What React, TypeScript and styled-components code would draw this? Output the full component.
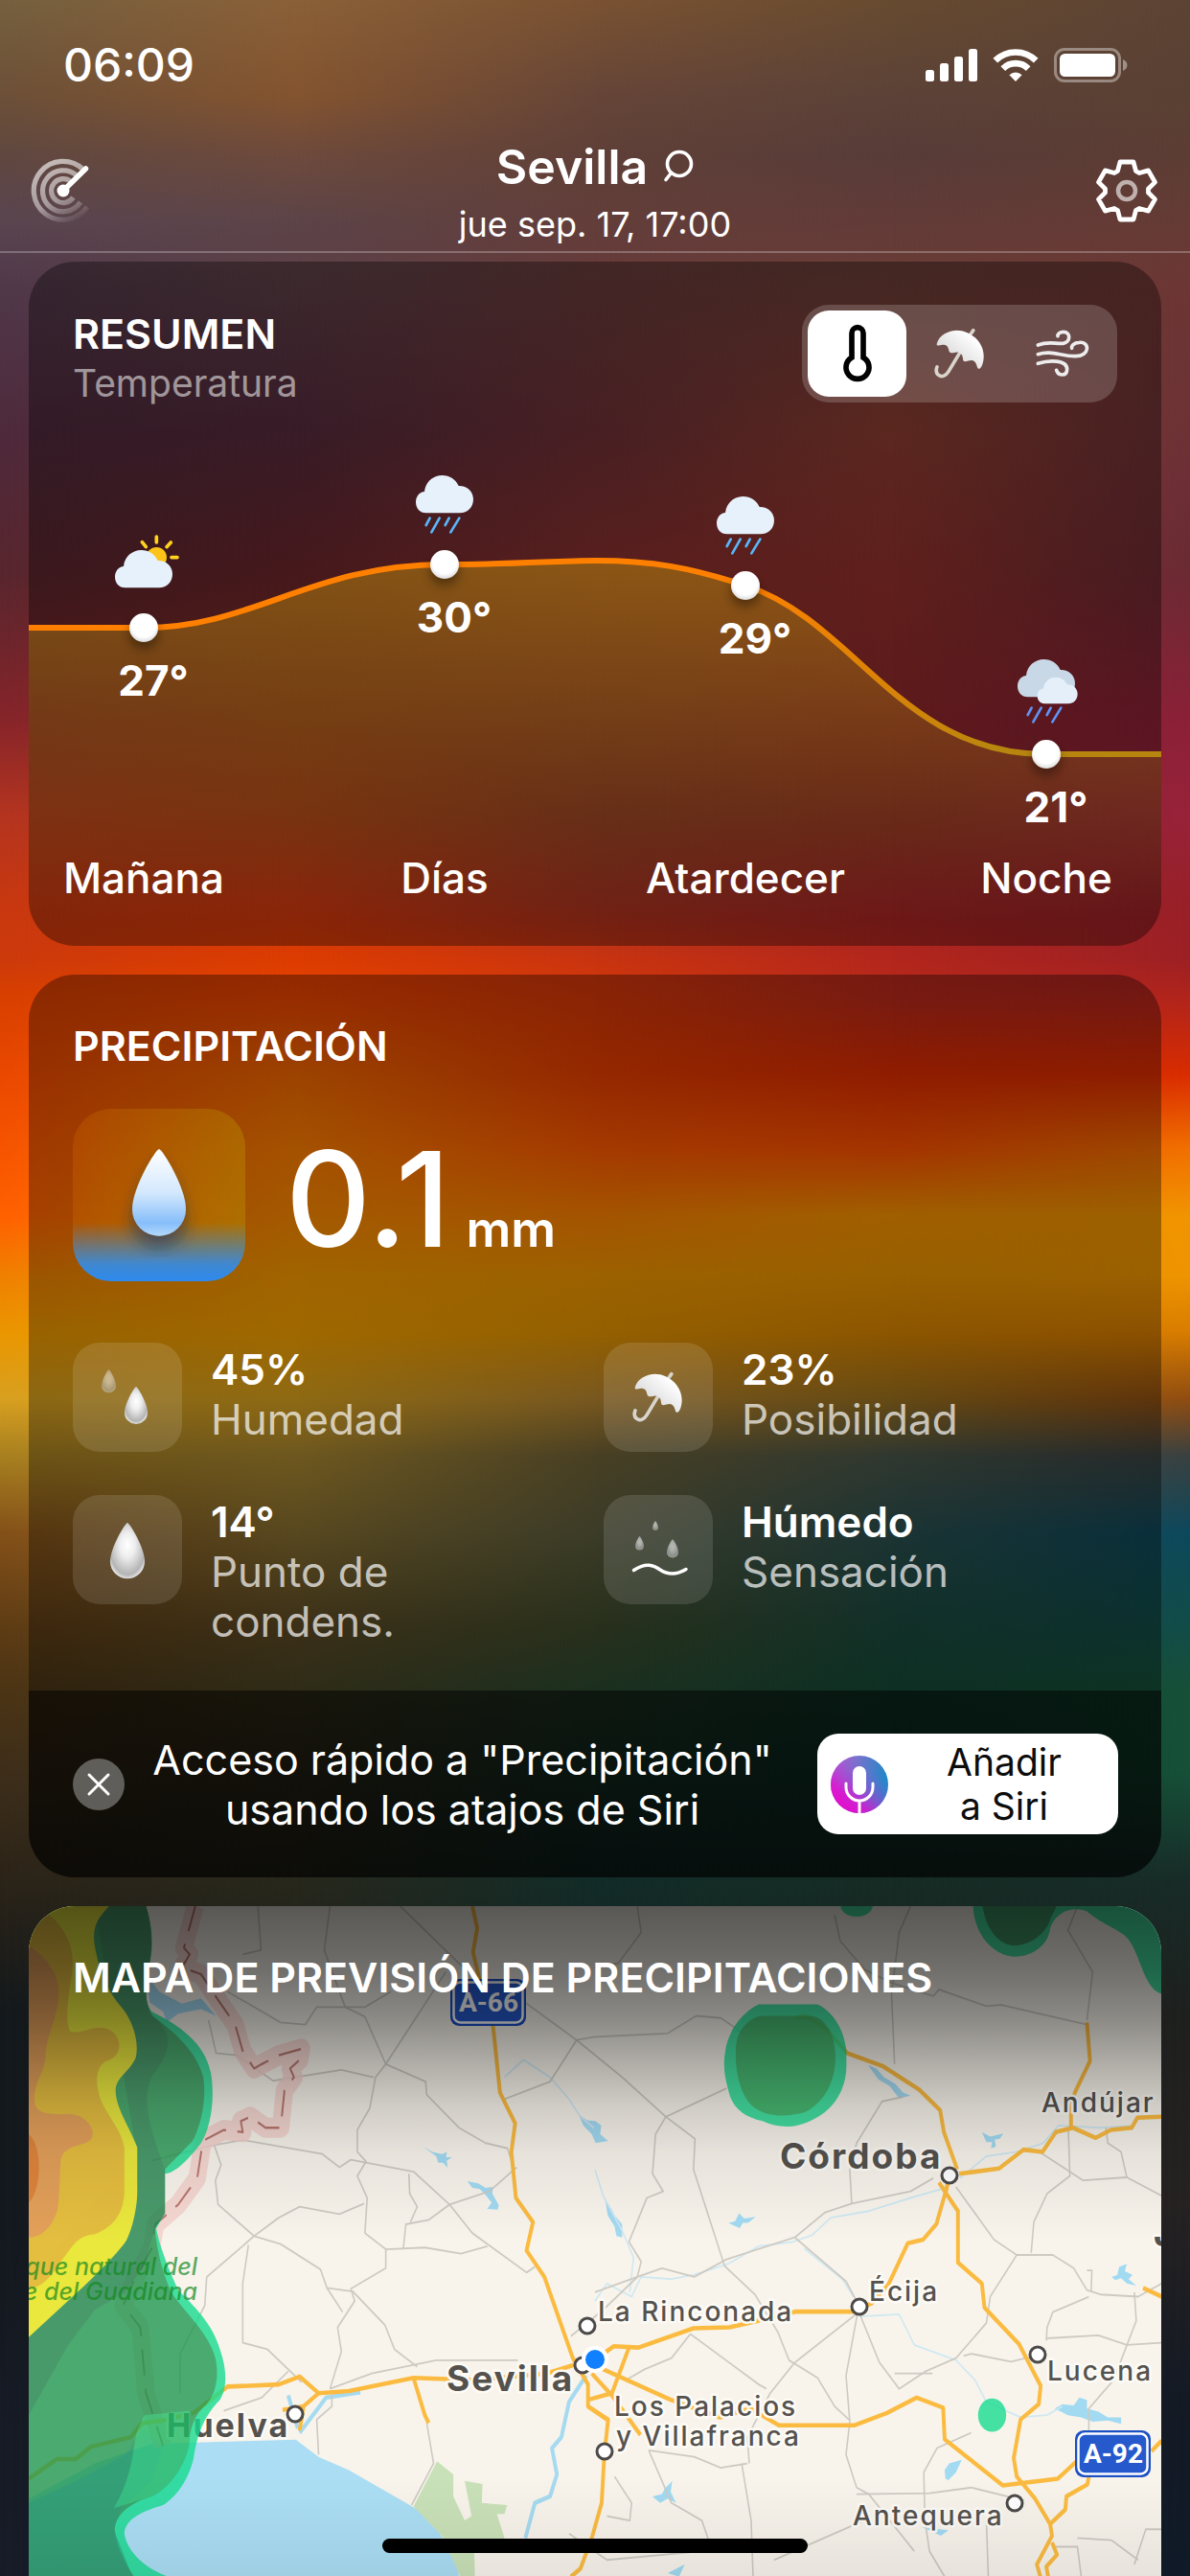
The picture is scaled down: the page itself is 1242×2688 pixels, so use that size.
import React, { useState } from "react";
import styled, { createGlobalStyle, css } from "styled-components";

const GlobalStyle = createGlobalStyle`
  *, *::before, *::after { box-sizing: border-box; }
  body { margin: 0; background: #14191c; }
  button { font: inherit; color: inherit; background: none; border: 0; padding: 0; cursor: pointer; }
  h1, h2, p, dl, dt, dd { margin: 0; font-weight: inherit; font-size: inherit; }
  svg { display: block; }
`;

/* ---------- backdrop ---------- */

const levels = [0, 100, 160, 230, 300, 450, 600, 750, 850, 940, 1000, 1040, 1120, 1200, 1270, 1330, 1390, 1460, 1520, 1600, 1700, 1760, 1850, 1960, 2100, 2300, 2500, 2688];

const skyColumns = [
  "#75603f #6d5038 #604840 #5a4550 #50384a #4e2a3c #58262e #86242a #b43420 #c83810 #cc3a0c #d84000 #ea4800 #f65400 #ff6000 #f08000 #ea9600 #d8a020 #a8801f #845018 #5e3c14 #4c3414 #3e2e1a #2c2418 #14191c #14191f #161b24 #171c28",
  "#8a6038 #84542f #6e4a3c #5c4448 #5c3e46 #562b3d #6c262b #8a3020 #a83818 #d03812 #dc3c00 #e84400 #f06800 #fc7e00 #fc8a00 #f69a00 #f6a000 #daa31f #a98731 #876f31 #5c4a25 #4a4425 #3a3420 #28281c #161c1c #161b20 #161b24 #161b24",
  "#7a5232 #664538 #5f4038 #633e3a #683a3a #6e3137 #8a302e #84302a #883028 #a83222 #c83410 #d43808 #e43e00 #fc5900 #fc8100 #f09600 #e49400 #b98731 #6f6237 #5c5c3e #3e4a2b #2c4a31 #1e4030 #122c28 #182020 #1a1c20 #161b24 #161b24",
  "#674b30 #5c4238 #583c38 #623b38 #6c3d36 #8c3d31 #93312b #90282b #8a2828 #a42528 #b2261c #b82a1c #dc2c00 #fc5000 #f69300 #ea9400 #d88400 #9d721f #4a564a #2b5050 #1c4a3e #164a38 #104034 #162c24 #1c2020 #201e20 #161b24 #121a26",
  "#5c4334 #5a4033 #5c3d34 #653b35 #6c3634 #6c3236 #6a2a34 #8a2038 #98223a #982028 #9c2024 #b0241c #d82c00 #f07000 #f09400 #ee9400 #d87c00 #904c10 #3a4040 #0c485c #124c48 #165038 #165038 #182c28 #1e201e #262222 #141a24 #101a28",
].map((column) => column.split(" "));

const fade = (index: number) =>
  index === 0 ? "none" : `linear-gradient(to right, transparent ${(index - 1) * 25}%, #000 ${index * 25}%)`;

const Sky = styled.div`
  position: absolute;
  inset: 0;
  z-index: -1;
`;

const SkyColumn = styled.div<{ $index: number }>`
  position: absolute;
  inset: 0;
  ${({ $index }) => css`
    background: linear-gradient(
      ${skyColumns[$index].map((color, i) => `${color} ${((levels[i] / 2688) * 100).toFixed(1)}%`).join(", ")}
    );
    mask-image: ${fade($index)};
  `}
`;

/* ---------- screen ---------- */

const Screen = styled.div`
  position: relative;
  isolation: isolate;
  display: flex;
  flex-direction: column;
  height: 100vh;
  min-height: 2200px;
  overflow: hidden;
  color: #fff;
  font-family: Inter, "Noto Sans", sans-serif;
`;

const StatusBar = styled.div`
  display: flex;
  justify-content: space-between;
  align-items: center;
  height: 136px;
  padding: 0 64px 0 66px;
`;

const Clock = styled.time`
  font-size: 48px;
  line-height: 56px;
  font-weight: 500;
`;

const StatusIcons = styled.div`
  display: flex;
  align-items: center;
  gap: 16px;
`;

const Header = styled.header`
  display: flex;
  justify-content: space-between;
  align-items: center;
  height: 128px;
  padding: 0 30px;
  border-bottom: 2px solid rgba(255, 255, 255, 0.25);
`;

const IconButton = styled.button`
  display: grid;
  place-items: center;
  width: 72px;
  height: 72px;
`;

const Place = styled.div`
  display: flex;
  flex-direction: column;
  align-items: center;
  padding-top: 6px;
`;

const PlaceButton = styled.button`
  display: flex;
  align-items: center;
  gap: 16px;
`;

const PlaceName = styled.h1`
  font-size: 50px;
  line-height: 64px;
  font-weight: 600;
`;

const DateLine = styled.p`
  font-size: 36px;
  line-height: 56px;
`;

const Content = styled.main`
  flex: 1;
  display: flex;
  flex-direction: column;
  gap: 30px;
  min-height: 0;
  padding: 9px 30px 0;
`;

const Card = styled.section`
  display: flex;
  flex-direction: column;
  overflow: hidden;
  border-radius: 48px;
  background: rgba(0, 0, 0, 0.35);
`;

const CardTitle = styled.h2`
  font-size: 43px;
  line-height: 52px;
  font-weight: 600;
`;

/* ---------- summary ---------- */

const SummaryHead = styled.div`
  display: flex;
  justify-content: space-between;
  align-items: flex-start;
  padding: 45px 46px 14px;
`;

const SummaryText = styled.div`
  padding-top: 4px;
`;

const Subtitle = styled.p`
  font-size: 39px;
  line-height: 52px;
  color: rgba(255, 255, 255, 0.55);
`;

const Segments = styled.div`
  display: flex;
  gap: 4px;
  padding: 6px;
  border-radius: 28px;
  background: rgba(255, 255, 255, 0.18);
`;

const Segment = styled.button<{ $active: boolean }>`
  display: grid;
  place-items: center;
  width: 103px;
  height: 90px;
  border-radius: 22px;
  color: ${({ $active }) => ($active ? "#000" : "#ededed")};
  background: ${({ $active }) => ($active ? "#fff" : "transparent")};
`;

const ChartSvg = styled.svg`
  width: 100%;
  height: auto;
`;

const ChartText = styled.text`
  font-size: 44px;
  fill: #fff;
  text-anchor: middle;
`;

const TempText = styled(ChartText)`
  font-weight: 700;
`;

const PeriodText = styled(ChartText)`
  font-weight: 500;
`;

/* ---------- precipitation ---------- */

const RainBody = styled.div`
  display: flex;
  flex-direction: column;
  gap: 40px;
  padding: 48px 46px 46px;
`;

const Amount = styled.div`
  display: flex;
  align-items: center;
  gap: 42px;
`;

const DropTile = styled.div`
  display: grid;
  place-items: center;
  width: 180px;
  height: 180px;
  border-radius: 40px;
  background: linear-gradient(rgba(60, 150, 255, 0) 66%, #4088d0 90%, #2e8aee), linear-gradient(100deg, rgba(255, 140, 0, 0.16), rgba(190, 160, 0, 0.36));
`;

const AmountText = styled.p`
  display: flex;
  align-items: baseline;
  gap: 16px;
  padding-top: 8px;
  font-size: 138px;
  line-height: 160px;
  font-weight: 500;
`;

const Unit = styled.span`
  font-size: 52px;
  line-height: 60px;
  font-weight: 600;
`;

const Stats = styled.dl`
  display: grid;
  grid-template-columns: 1fr 1fr;
  gap: 2px 18px;
  padding-top: 24px;
`;

const Stat = styled.div`
  display: grid;
  grid-template-columns: 114px 1fr;
  column-gap: 30px;
  min-height: 157px;
`;

const StatTile = styled.div`
  display: grid;
  place-items: center;
  width: 114px;
  height: 114px;
  border-radius: 28px;
  background: rgba(255, 255, 255, 0.12);
`;

const StatText = styled.div`
  display: flex;
  flex-direction: column-reverse;
  justify-content: flex-end;
  padding: 2px 120px 0 0;
  font-size: 44px;
  line-height: 52px;
`;

const StatLabel = styled.dt`
  color: rgba(255, 255, 255, 0.7);
`;

const StatValue = styled.dd`
  font-weight: 600;
`;

const SiriBar = styled.div`
  display: flex;
  align-items: center;
  padding: 45px 45px 45px 46px;
  background: rgba(0, 0, 0, 0.5);
`;

const CloseButton = styled.button`
  display: grid;
  place-items: center;
  flex: none;
  width: 54px;
  height: 54px;
  border-radius: 50%;
  background: rgba(255, 255, 255, 0.33);
`;

const SiriText = styled.p`
  flex: 1;
  padding-right: 18px;
  font-size: 43px;
  line-height: 52px;
  text-align: center;
`;

const SiriButton = styled.button`
  display: flex;
  align-items: center;
  flex: none;
  width: 314px;
  height: 105px;
  padding: 0 14px;
  border-radius: 22px;
  background: #fff;
  color: #0c0c0c;
`;

const SiriLabel = styled.span`
  flex: 1;
  padding: 0 36px 0 52px;
  font-size: 39px;
  line-height: 46px;
`;

/* ---------- map ---------- */

const MapCard = styled(Card)`
  flex: 1;
  display: grid;
  min-height: 0;
  border-radius: 48px 48px 0 0;
  background: #f8f4ec;
  > * { grid-area: 1 / 1; }
`;

const MapSvg = styled.svg`
  width: 100%;
  height: 100%;
  min-height: 0;
`;

const MapTitle = styled(CardTitle)`
  z-index: 1;
  padding: 48px 46px 0;
`;

const Town = styled.text<{ $size: number }>`
  font-size: ${({ $size }) => $size}px;
  font-weight: ${({ $size }) => ($size > 30 ? 700 : 500)};
  letter-spacing: 2px;
  fill: #55524e;
  stroke: #fdfbf6;
  stroke-width: 5px;
  stroke-linejoin: round;
  paint-order: stroke;
`;

const ParkText = styled.text`
  font-size: 25px;
  font-style: italic;
  font-weight: 500;
  fill: #12881e;
  fill-opacity: 0.7;
  text-anchor: end;
`;

const ShieldText = styled.text`
  font-family: "Liberation Sans Narrow", Roboto, sans-serif;
  font-size: 28px;
  font-weight: 700;
  fill: #fff;
  text-anchor: middle;
`;

const HomeIndicator = styled.div`
  position: absolute;
  bottom: 24px;
  left: 50%;
  width: 444px;
  height: 15px;
  margin-left: -222px;
  border-radius: 8px;
  background: #000;
`;

/* ---------- icons ---------- */

const SignalIcon = () => (
  <svg width="54" height="36" viewBox="0 0 54 36" fill="#fff" aria-hidden="true">
    <rect x="0" y="23" width="9" height="12" rx="2.5" />
    <rect x="15" y="16" width="9" height="19" rx="2.5" />
    <rect x="30" y="9" width="9" height="26" rx="2.5" />
    <rect x="45" y="1" width="9" height="34" rx="2.5" />
  </svg>
);

const WifiIcon = () => (
  <svg width="48" height="36" viewBox="0 0 48 36" fill="none" stroke="#fff" strokeWidth="6.6" aria-hidden="true">
    <path d="M2.8 13.2a30 30 0 0 1 42.4 0" />
    <path d="M10.8 21.6a18.7 18.7 0 0 1 26.4 0" />
    <path d="M24 35l-6.6-6.8a9.4 9.4 0 0 1 13.2 0z" fill="#fff" stroke="none" />
  </svg>
);

const BatteryIcon = () => (
  <svg width="78" height="36" viewBox="0 0 78 36" aria-hidden="true">
    <rect x="1.5" y="1.5" width="67" height="33" rx="9.5" fill="none" stroke="#fff" strokeOpacity=".38" strokeWidth="3" />
    <rect x="6" y="6" width="58" height="24" rx="5.5" fill="#fff" />
    <path d="M72 12c6 2.500 6 9.500 0 12z" fill="#fff" fillOpacity=".42" />
  </svg>
);

const RadarIcon = () => (
  <svg width="68" height="68" viewBox="-34 -34 68 68" fill="none" aria-hidden="true">
    <defs>
      <linearGradient id="sweep" gradientUnits="userSpaceOnUse" x1="-14" y1="-28" x2="18" y2="31">
        <stop offset="0" stopColor="#fff" stopOpacity=".62" />
        <stop offset=".55" stopColor="#fff" stopOpacity=".45" />
        <stop offset="1" stopColor="#fff" stopOpacity="0" />
      </linearGradient>
    </defs>
    <g stroke="url(#sweep)" strokeWidth="5.2">
      <path d="M20.500-22.500A30.500 30.500 0 1 0 25 17" />
      <path d="M14-16A21.500 21.500 0 1 0 18 12" />
      <path d="M8-9.600A12.500 12.500 0 1 0 10.500 7" />
    </g>
    <path d="M0 0L23.500-23" stroke="#fff" strokeWidth="5.5" strokeLinecap="round" />
    <circle r="6.500" fill="#fff" />
  </svg>
);

const gearPoints = [0, 1, 2, 3, 4, 5]
  .flatMap((k) => {
    const a = (k * Math.PI) / 3;
    return [[-9.5, -20.5], [-7, -30], [7, -30], [9.5, -20.5]].map(
      ([x, y]) => `${(x * Math.cos(a) - y * Math.sin(a)).toFixed(1)},${(x * Math.sin(a) + y * Math.cos(a)).toFixed(1)}`,
    );
  })
  .join(" ");

const GearIcon = () => (
  <svg width="68" height="68" viewBox="-34 -34 68 68" fill="none" aria-hidden="true">
    <polygon points={gearPoints} stroke="#fff" strokeWidth="4.8" strokeLinejoin="round" />
    <circle r="9" stroke="#fff" strokeOpacity=".6" strokeWidth="4.500" />
  </svg>
);

const SearchIcon = () => (
  <svg width="32" height="36" viewBox="0 0 32 36" fill="none" stroke="#fff" strokeWidth="3.600" strokeLinecap="round" aria-hidden="true">
    <circle cx="17" cy="15" r="12.500" />
    <path d="M8.500 24.500L3 31.500" />
  </svg>
);

const ThermometerIcon = () => (
  <svg width="32" height="62" viewBox="174 114 96 186" fill="none" stroke="currentColor" strokeWidth="17" aria-hidden="true">
    <path d="M204 143a18 18 0 0 1 36 0V219A36 36 0 1 1 204 219z" />
  </svg>
);

const UmbrellaIcon = ({ id }: { id: string }) => (
  <svg width="54" height="54" viewBox="0 0 164 164" aria-hidden="true">
    <defs>
      <linearGradient id={id} x1="0" y1="1" x2="1" y2="0">
        <stop offset=".3" stopColor="#dcdcdc" />
        <stop offset=".8" stopColor="#fff" />
      </linearGradient>
    </defs>
    <path d="M82 78L46 138C38 152 24 158 14 150C5 143 6 132 9 124M117 18L124 8" fill="none" stroke="#dad5cc" strokeWidth="11" strokeLinecap="round" />
    <path
      d="M8 52C14 24 45 8 72 8C115 8 157 45 157 90C157 110 150 130 141 130C134 130 137 108 122 104C114 100 98 112 92 104C90 94 92 84 78 78C66 74 56 86 48 76C44 66 46 56 30 54C20 52 8 62 8 52Z"
      fill={`url(#${id})`}
    />
  </svg>
);

const WindIcon = () => (
  <svg width="58" height="54" viewBox="786 130 174 160" fill="none" stroke="currentColor" strokeWidth="11" strokeLinecap="round" aria-hidden="true">
    <path d="M796 183C830 170 850 180 875 178C900 174 898 142 876 142C863 142 857 150 858 155" />
    <path d="M796 212C840 198 870 220 915 218C958 218 960 172 925 175C908 176 900 186 902 193" />
    <path d="M796 241C830 230 888 228 887 260C886 282 860 280 854 262" />
  </svg>
);

const dropPath = "M50 0C56 0 100 72 100 112A50 50 0 0 1 0 112C0 72 44 0 50 0Z";

const Drop = ({ x, y, w, opacity = 1, tint = "greyDrop" }: { x: number; y: number; w: number; opacity?: number; tint?: string }) => (
  <path d={dropPath} transform={`translate(${x} ${y}) scale(${w / 100})`} fill={`url(#${tint})`} opacity={opacity} />
);

const DropDefs = () => (
  <defs>
    <radialGradient id="greyDrop" cx=".5" cy=".4" r=".62">
      <stop offset="0" stopColor="#fff" />
      <stop offset=".35" stopColor="#eee" />
      <stop offset=".85" stopColor="#b4b4b4" />
      <stop offset="1" stopColor="#ececec" />
    </radialGradient>
    <linearGradient id="blueDrop" x1="0" y1="0" x2="0" y2="1">
      <stop offset="0" stopColor="#fff" />
      <stop offset=".5" stopColor="#d4e8fd" />
      <stop offset=".85" stopColor="#86befa" />
      <stop offset="1" stopColor="#b4d8fc" />
    </linearGradient>
    <filter id="dropShade" x="-50%" y="-20%" width="200%" height="160%">
      <feDropShadow dx="0" dy="12" stdDeviation="8" floodColor="#0a3060" floodOpacity=".55" />
    </filter>
  </defs>
);

const BigDropIcon = () => (
  <svg width="100" height="130" viewBox="-22 -10 100 130" aria-hidden="true">
    <DropDefs />
    <g filter="url(#dropShade)">
      <Drop x={0} y={7} w={56} tint="blueDrop" />
    </g>
  </svg>
);

const HumidityIcon = () => (
  <svg width="114" height="114" viewBox="0 0 114 114" aria-hidden="true">
    <Drop x={30} y={28} w={15} opacity={0.5} />
    <Drop x={54} y={46} w={24} />
  </svg>
);

const DewIcon = () => (
  <svg width="114" height="114" viewBox="0 0 114 114" aria-hidden="true">
    <Drop x={39} y={29} w={36} />
  </svg>
);

const FeelIcon = () => (
  <svg width="114" height="114" viewBox="0 0 114 114" aria-hidden="true">
    <Drop x={51} y={27} w={6} opacity={0.6} />
    <Drop x={33} y={43} w={9} opacity={0.6} />
    <Drop x={66} y={46} w={12} opacity={0.6} />
    <path d="M31.500 78.500C44 70 52 73 59 78C68 84 77 83 86 77.500" fill="none" stroke="#fff" strokeWidth="3.500" strokeLinecap="round" />
  </svg>
);

const CloseIcon = () => (
  <svg width="26" height="26" viewBox="0 0 26 26" stroke="#fff" strokeWidth="3" strokeLinecap="round" aria-hidden="true">
    <path d="M3 3L23 23M23 3L3 23" />
  </svg>
);

const MicIcon = () => (
  <svg width="60" height="60" viewBox="0 0 60 60" fill="none" aria-hidden="true">
    <defs>
      <linearGradient id="siriTop" x1="0" y1="0" x2="1" y2=".2">
        <stop offset="0" stopColor="#c060d0" />
        <stop offset="1" stopColor="#2088c8" />
      </linearGradient>
      <linearGradient id="siriBottom" x1=".1" y1="1" x2=".7" y2=".2">
        <stop offset="0" stopColor="#f000c8" />
        <stop offset=".35" stopColor="#e010d0" stopOpacity=".85" />
        <stop offset="1" stopColor="#8060d8" stopOpacity="0" />
      </linearGradient>
    </defs>
    <circle cx="30" cy="30" r="30" fill="url(#siriTop)" />
    <circle cx="30" cy="30" r="30" fill="url(#siriBottom)" />
    <rect x="23" y="11" width="14" height="30" rx="7" fill="#fff" />
    <path d="M16 29v4a14 14 0 0 0 28 0v-4M30 47v12" stroke="#fff" strokeWidth="3" strokeLinecap="round" />
  </svg>
);

/* ---------- chart ---------- */

const cloudPath = "M32 118C12 118 0 102 0 84C0 66 12 52 27 51C30 20 55 0 82 0C106 0 126 14 134 33C160 32 180 50 180 75C180 100 162 118 138 118Z";

const RainLines = ({ color, y = 0 }: { color: string; y?: number }) => (
  <path d="M44 134L32 156M74 134L49 178M104 134L92 156M136 134L109 178" transform={`translate(0 ${y})`} stroke={color} strokeWidth="8" strokeLinecap="round" />
);

const WeatherGlyph = ({ kind, x, y }: { kind: string; x: number; y: number }) => (
  <g transform={`translate(${x} ${y}) scale(.3333)`}>
    {kind === "sun" && (
      <>
        <circle cx="130" cy="23" r="32" fill="#fcc419" />
        <path d="M130-42V-24M85-25L97-10M175-24L162-10M177 23H195" stroke="#ffd320" strokeWidth="11" strokeLinecap="round" />
      </>
    )}
    <path d={cloudPath} fill={kind === "night" ? "#c9d8e6" : "#e6f1fb"} />
    {kind === "night" && <path d={cloudPath} transform="translate(62 56) scale(.7)" fill="#e4effa" />}
    {kind === "rain" && <RainLines color="#58b6f8" />}
    {kind === "night" && <RainLines color="#5f92f4" y={18} />}
  </g>
);

const periods = [
  { name: "Mañana", temp: "27°", kind: "sun", x: 120, y: 215, iconY: 134 },
  { name: "Días", temp: "30°", kind: "rain", x: 434, y: 149, iconY: 56 },
  { name: "Atardecer", temp: "29°", kind: "rain", x: 748, y: 171, iconY: 78 },
  { name: "Noche", temp: "21°", kind: "night", x: 1062, y: 347, iconY: 248 },
];

const curve = "M0 215H120C235 215 295 149 434 149C510 149 550 145 592 145C650 145 690 152 748 171C862 208 910 347 1062 347H1182";

const TemperatureChart = () => (
  <ChartSvg viewBox="0 0 1182 547" role="img" aria-label="Temperatura por periodo">
    <defs>
      <linearGradient id="under" gradientUnits="userSpaceOnUse" x1="0" y1="145" x2="0" y2="520">
        <stop offset="0" stopColor="#aa7810" stopOpacity=".62" />
        <stop offset="1" stopColor="#aa7810" stopOpacity="0" />
      </linearGradient>
      <linearGradient id="line" gradientUnits="userSpaceOnUse" x1="748" y1="0" x2="1010" y2="0">
        <stop offset="0" stopColor="#ff8000" />
        <stop offset="1" stopColor="#b8860f" />
      </linearGradient>
      <radialGradient id="knob" cx=".5" cy=".4" r=".6">
        <stop offset=".7" stopColor="#fff" />
        <stop offset="1" stopColor="#dcdcdc" />
      </radialGradient>
      <filter id="knobShade" x="-60%" y="-40%" width="220%" height="240%">
        <feDropShadow dx="0" dy="7" stdDeviation="6" floodOpacity=".4" />
      </filter>
    </defs>
    <path d={`${curve}V547H0Z`} fill="url(#under)" />
    <path d={curve} fill="none" stroke="url(#line)" strokeWidth="6" />
    {periods.map((p) => (
      <g key={p.name}>
        <WeatherGlyph kind={p.kind} x={p.x - 30} y={p.iconY} />
        <circle cx={p.x} cy={p.y} r="15" fill="url(#knob)" filter="url(#knobShade)" />
        <TempText x={p.x + 10} y={p.y + 71}>{p.temp}</TempText>
        <PeriodText x={p.x} y="492">{p.name}</PeriodText>
      </g>
    ))}
  </ChartSvg>
);

/* ---------- map drawing ---------- */

const highways = [
  "1245,40 1258,90 1247,145 1262,200 1300,315 1318,465 1358,535 1348,600 1360,705 1405,760 1388,825 1435,885 1510,1070 1550,1130 1550,1180 1600,1210",
  "76,1345 150,1300 200,1300 240,1272 345,1250 375,1218 430,1212 510,1195 600,1135 735,1130 790,1112 840,1150 920,1145 1090,1115 1250,1120 1440,1105 1515,1085",
  "745,1188 800,1180 840,1150", "800,1182 790,1235", "1090,1115 1120,1200 1130,1218",
  "1550,1085 1618,1043 1683,1046 1828,1002 1923,1000 1998,985 2098,964 2248,964 2298,945 2343,900 2393,808 2433,800 2468,765 2493,690 2503,655",
  "1658,1046 1613,1150 1550,1165",
  "1550,1080 1768,1165 1898,1205 1978,1185 2053,1223 2253,1223 2338,1195 2416,1160 2486,1183 2490,1255 2643,1360 2788,1345 2838,1305",
  "1550,1180 1603,1210 1593,1290 1586,1400 1560,1480 1530,1550 1505,1568", "1560,1105 1613,1155 1688,1245",
  "2523,640 2488,555 2478,505 2423,458 2328,405 2233,375 2178,320 2123,290 2098,295",
  "2528,650 2633,638 2698,595 2748,600 2783,555 2828,545 2888,568 2928,550 2983,545 2998,522 3062,520",
  "2823,545 2823,500 2833,465 2873,393 2865,305",
  "2475,670 2525,735 2525,852 2588,900 2595,955 2686,1038 2743,1133 2738,1175 2690,1210 2672,1298 2680,1340 2728,1390 2768,1448 2773,1475 2733,1540 2743,1570",
  "2493,690 2503,655",
  "2773,1490 2786,1518 2758,1545 2763,1570", "2768,1448 2808,1415 2811,1385 2866,1358 2871,1335", "3013,910 3062,930", "3035,1282 3062,1258",
];

const minorRoads = [
  "870,40 855,140 910,270 962,292 1017,400 990,430 975,500 942,550 942,600 965,622 942,655 968,705 962,785 1017,822 1017,865 925,912 935,940 890,1000 900,1055 870,1140",
  "680,40 688,140 640,150", "1055,40 1245,200", "600,235 740,305 805,310 835,270 962,270 1030,235", "1175,190 1017,400 1122,440 1125,470 1210,545 1280,580 1338,592 1348,620",
  "550,300 570,375 625,380 720,438 900,413 985,430", "400,620 560,585 640,573 850,605 895,635 925,618 1090,645 1185,720 1245,785 1388,875 1410,862",
  "1362,635 1290,690 1185,720 1130,755 1070,765 1063,822", "1078,650 1080,695 1100,725 1082,760", "960,718 895,742 790,725 735,750 670,792 575,720 568,665 583,630 565,585",
  "670,792 545,885 540,950 475,1060 475,1150", "655,812 640,900 640,1035 705,1050 795,1125", "670,792 740,810 845,868 862,910 930,918 1015,995 1040,1050 1100,1090", "1017,822 1120,818 1215,832 1285,815",
  "870,1140 980,1105 1150,1075 1365,1075", "862,910 903,965", "1125,1218 1143,1310 1085,1405", "840,1290 835,1210 875,1180 875,1145", "590,1190 690,1160 760,1100",
  "1330,480 1450,440 1520,345 1385,260", "1520,345 1640,430 1755,520 1915,455", "1520,345 1568,338 1760,330 1835,290 1900,295 1960,330", "1755,520 1728,560 1720,650 1748,690 1705,705 1658,805 1690,850 1680,885 1568,920",
  "1755,520 1832,570 1828,640 1910,860 1990,925 2050,1010 2080,1075 2155,1115 2200,1180 2240,1212", "1680,885 1745,865 1830,885 1915,845 2095,795 2175,738 2245,718 2400,690 2460,660",
  "2245,718 2240,640 2258,580 2325,485 2380,475", "2095,795 2230,895 2264,950 2230,1110 2240,1215 2230,1290 2258,1365 2290,1380 2410,1510", "1505,1020 1590,960 1680,885",
  "2264,965 2095,1080 2030,1150 1970,1250 1975,1310", "1820,1015 1770,1070 1700,1095 1650,1120", "1820,1015 2000,1130 2020,1140", "2264,965 2318,1080 2370,1140 2440,1100 2520,1070 2600,990 2610,930 2680,835", "2358,1105 2458,1105",
  "2520,680 2620,800 2680,835 2775,835 2830,865 2865,915 2900,925 3000,930 3062,900", "2718,830 2725,760 2760,695 2820,655 2816,550", "2740,600 2855,665 2970,658 3062,700", "2970,658 2955,600 2920,580 2915,545",
  "2358,400 2350,240 2370,100 2400,40", "2200,60 2215,120 2280,185 2350,215 2460,245 2475,230 2600,268 2640,265 2865,310", "2865,300 2880,190 2815,95 2840,40", "1680,40 1690,100 1630,170 1568,180",
  "2758,1030 2760,1000 2775,965 2870,930", "2758,1025 2895,1018 2970,1040 3062,1035", "2990,920 2995,985 2935,1120 2870,1185 2870,1240", "2540,1065 2560,1060 2665,1078 2750,1060",
  "1710,1280 1770,1400 1850,1440 1878,1510", "1970,1310 1900,1320 1830,1295 1710,1280", "1955,1310 1980,1440 1985,1568", "1620,1340 1665,1400 1660,1440 1600,1430", "2258,1380 2450,1378 2560,1365 2700,1395",
  "2560,1240 2470,1275 2435,1330 2438,1440 2450,1510 2490,1568", "2040,1530 2290,1435", "2600,1440 2605,1568", "2775,1500 2840,1500 2850,1568", "2840,1480 2930,1485 3000,1530", "2990,1540 3020,1460 3062,1460", "1850,1510 1600,1530 1500,1470", "2865,870 2878,870 2876,920",
];

const streams = [
  "1568,940 1600,900 1665,930 1690,885 1770,890 1830,880 1920,855 2000,815 2090,805 2140,790 2190,750 2290,735 2400,705 2460,690 2500,680", "2530,660 2600,610 2680,600 2750,580 2790,540 2900,545 2990,540",
  "2270,975 2370,970 2410,1040 2520,1075 2570,1120 2600,1170 2690,1205 2760,1200 2800,1180", "1330,430 1380,390 1450,430 1500,480 1530,520 1565,545", "1568,640 1590,700 1640,780 1670,840 1660,920", "2120,820 2220,890 2250,930",
];

const lakes = [
  "1115,588 1140,600 1165,605 1178,600 1176,612 1192,612 1178,620 1180,636 1168,625 1155,625 1150,610", "1232,667 1262,672 1280,682 1300,680 1298,695 1315,722 1312,732 1284,730 1296,716 1282,700 1265,685 1245,682", "1525,515 1548,528 1570,530 1585,540 1582,560 1603,575 1570,580 1560,560 1538,540",
  "1595,708 1612,730 1620,745 1640,765 1640,795 1625,792 1620,770 1602,745",
  "1920,762 1938,758 1948,740 1962,752 1992,748 1972,762 1958,762 1950,774", "2288,402 2310,410 2330,430 2360,445 2380,465 2400,472 2370,478 2345,450 2315,435", "2588,555 2610,565 2645,558 2635,570 2622,572 2625,588 2612,592 2615,578 2600,578", "2930,885 2945,880 2950,862 2970,855 2965,872 2985,880 2975,890 2995,905 2970,900 2955,888 2940,892",
  "1720,1385 1745,1380 1752,1368 1772,1350 1768,1375 1782,1400 1760,1390 1740,1400",
  "2490,1325 2502,1310 2535,1302 2520,1330 2500,1348 2492,1345", "2780,1185 2800,1175 2830,1178 2845,1160 2865,1165 2865,1185 2895,1192 2920,1205 2955,1205 2955,1220 2920,1212 2880,1215 2850,1205 2815,1200", "2430,1455 2500,1462 2480,1475", "1760,1560 1805,1540 1790,1568",
  "385,195 420,235 480,262 530,250 570,290 530,275 470,285 440,305 430,280 395,260",
];

const border = "515,40 485,135 500,150 480,180 530,195 580,260 620,310 640,370 670,410 690,400 735,380 795,365 790,390 765,410 775,430 750,460 740,545 700,545 660,520 635,530 640,555 590,550 535,575 520,660 470,720 410,765 400,820 350,900 325,950 370,1000 385,1150 430,1270";

const towns = [
  { x: 436, y: 506, name: "Sevilla", size: 37 },
  { x: 144, y: 554, name: "Huelva", size: 34 },
  { x: 784, y: 274, name: "Córdoba", size: 37 },
  { x: 1174, y: 355, name: "J", size: 37 },
  { x: 594, y: 433, name: "La Rinconada", size: 28 },
  { x: 877, y: 412, name: "Écija", size: 28 },
  { x: 611, y: 532, name: "Los Palacios", size: 28 },
  { x: 613, y: 563, name: "y Villafranca", size: 28 },
  { x: 1063, y: 495, name: "Lucena", size: 28 },
  { x: 860, y: 646, name: "Antequera", size: 28 },
  { x: 1057, y: 215, name: "Andújar", size: 28 },
];

const townMarks = [[278, 530], [578, 479], [583, 438], [601, 569], [867, 418], [961, 281], [1053, 468], [1029, 623]];

const Shield = ({ x, y, name }: { x: number; y: number; name: string }) => (
  <g transform={`translate(${x} ${y})`}>
    <rect width="79" height="49" rx="9" fill="#1b4fc4" />
    <rect x="3.500" y="3.500" width="72" height="42" rx="7" fill="#2559cc" stroke="#fff" strokeWidth="2.500" />
    <ShieldText x="40" y="34">{name}</ShieldText>
  </g>
);

const ForecastMap = () => (
  <MapSvg viewBox="0 0 1182 700" preserveAspectRatio="xMidYMin slice" role="img" aria-label="Mapa de previsión de precipitaciones">
    <defs>
      <linearGradient id="shade" x1="0" y1="0" x2="0" y2="1">
        <stop offset="0" stopOpacity=".64" />
        <stop offset=".1" stopOpacity=".54" />
        <stop offset=".17" stopOpacity=".43" />
        <stop offset=".24" stopOpacity=".28" />
        <stop offset=".3" stopOpacity=".16" />
        <stop offset=".37" stopOpacity=".07" />
        <stop offset=".5" stopOpacity="0" />
        <stop offset=".85" stopOpacity="0" />
        <stop offset="1" stopOpacity=".07" />
      </linearGradient>
    </defs>
    <g transform="scale(.396 .4579) translate(-76 -40)" fill="none" strokeLinejoin="round">
      <path d="M76 1390L250 1310L400 1265L780 1256L840 1295L920 1325L1000 1365L1100 1415L1160 1470L1200 1530L1212 1570H76Z" fill="#abdef4" />
      <path d="M1152 1305L1195 1335L1195 1385L1225 1440L1243 1430L1225 1350L1272 1357L1270 1400L1337 1405L1330 1425L1310 1425L1330 1480L1250 1500L1252 1570H1215L1165 1475L1090 1408Z" fill="#c9e1b8" />
      {lakes.map((points) => <polygon key={points} points={points} fill="#a2daf2" />)}
      <g stroke="#cfe8f2" strokeWidth="4">{streams.map((points) => <polyline key={points} points={points} />)}</g>
      <path d="M1545 1110L1500 1170L1480 1250L1455 1275L1468 1335L1450 1385L1410 1400L1385 1480M950 1148L860 1160L790 1240M760 1155L785 1230" stroke="#a6daf0" strokeWidth="10" />
      <g stroke="#cdcac3" strokeWidth="4">{minorRoads.map((points) => <polyline key={points} points={points} />)}</g>
      <polyline points={border} stroke="#f4d0ca" strokeOpacity=".8" strokeWidth="46" />
      <polyline points={border} stroke="#b87870" strokeWidth="5" strokeDasharray="60 30" />
      <g stroke="#fbbb40" strokeWidth="10">{highways.map((points) => <polyline key={points} points={points} />)}</g>
    </g>
    <Shield x={440} y={76} name="A-66" />
    <Shield x={1092} y={547} name="A-92" />
    {towns.map((town) => <Town key={town.name} x={town.x} y={town.y} $size={town.size}>{town.name}</Town>)}
    <g fill="#fff" stroke="#4c4a48" strokeWidth="3">
      {townMarks.map(([x, y]) => <circle key={x} cx={x} cy={y} r="8" />)}
    </g>
    <circle cx="591" cy="473" r="12" fill="#1080ff" stroke="#fff" strokeWidth="4" />
    <g transform="scale(.396 .4579) translate(-76 -40)">
      <g opacity=".8">
        <path d="M76 40H385C400 80 408 130 392 180C385 220 378 255 400 280C470 310 540 350 556 420C568 480 555 545 530 580C500 615 460 650 435 650V740L412 775C420 810 440 860 470 915C510 950 560 990 580 1050C600 1100 598 1140 580 1165C540 1200 520 1240 510 1300C490 1370 440 1400 430 1405C380 1418 330 1435 328 1470C335 1510 380 1550 450 1570H76Z" fill="#16dc90" />
        <path d="M76 40H385C400 80 405 130 392 180C385 220 378 255 402 290C450 320 520 370 536 430C545 480 530 540 508 575C480 600 440 635 435 640V740L408 775C415 830 430 880 452 920C480 960 550 1010 568 1070C578 1110 570 1150 545 1175C515 1195 500 1230 500 1260C490 1320 440 1370 400 1385C340 1400 300 1430 303 1465C310 1510 340 1550 355 1570H76Z" fill="#209850" />
        <path d="M250 40H385C400 80 405 130 392 180C385 220 378 255 402 290C470 340 440 380 400 430C370 480 400 560 435 640V740L408 775L380 860L330 920L250 960L180 1040L76 1200V900L360 600Z" fill="#1c6c48" opacity=".45" />
        <path d="M76 1400L200 1350L330 1290L380 1230L430 1270L400 1350L320 1410L300 1460L350 1570H76Z" fill="#108c62" opacity=".55" />
        <path d="M380 1200L500 1190L500 1260C490 1320 440 1370 400 1385L300 1412C350 1340 350 1280 360 1240Z" fill="#1ed070" opacity=".6" />
      </g>
      <g opacity=".92">
        <path d="M76 40H288C255 70 240 90 252 140C265 200 290 240 320 270C350 300 368 350 358 385C345 415 305 430 305 460C305 500 340 540 362 590V690C362 740 340 800 325 812C290 850 230 900 210 915L76 1022Z" fill="#f8ee3a" />
        <path d="M76 40H100C170 80 200 130 190 190C180 250 170 300 185 325C215 335 250 305 290 322C325 340 320 380 290 390C250 400 250 440 265 480C285 520 320 550 328 590V680C330 740 300 770 250 788C200 790 190 820 160 850C140 880 110 910 76 912Z" fill="#f2c03c" />
        <path d="M76 130C110 150 150 180 155 230C158 290 120 330 120 390C110 430 85 450 92 490C100 515 130 515 190 514C230 520 255 550 240 572C220 590 170 580 160 620C158 650 158 690 152 730C140 770 110 795 76 795Z" fill="#f0a058" />
        <path d="M76 560C92 570 103 600 103 635C103 670 92 705 76 715Z" fill="#ec8238" />
      </g>
      <g fill="#16dc90" fillOpacity=".8">
        <path d="M1912 370C1920 320 1960 280 2000 264H2155C2195 280 2225 320 2231 370V400C2232 460 2195 500 2160 518C2110 545 2060 550 2010 530C1960 520 1930 500 1920 460C1910 430 1905 400 1912 370Z" />
        <ellipse cx="2615" cy="1200" rx="37" ry="38" />
        <path d="M2565 40C2568 110 2625 155 2675 155C2725 155 2765 125 2768 90C2785 50 2830 40 2865 52C2910 85 2960 95 2978 120C3008 160 3018 230 3062 240V40Z" />
        <ellipse cx="2258" cy="40" rx="42" ry="24" />
      </g>
      <path d="M1940 360C1945 310 1990 290 2010 290H2140C2180 295 2202 340 2202 380C2204 440 2170 490 2120 510C2080 520 2030 520 2000 505C1960 490 1935 430 1940 360Z" fill="#4a9c50" fillOpacity=".6" />
      <path d="M2590 40C2600 100 2640 130 2675 130C2715 130 2760 100 2768 70L2785 40Z" fill="#40704a" fillOpacity=".65" />
    </g>
    <ParkText x="176" y="385">que natural del</ParkText>
    <ParkText x="176" y="411">e del Guadiana</ParkText>
    <rect width="1182" height="700" fill="url(#shade)" />
  </MapSvg>
);

/* ---------- app ---------- */

const modes = [
  { id: "temp", label: "Temperatura", icon: <ThermometerIcon /> },
  { id: "rain", label: "Lluvia", icon: <UmbrellaIcon id="umbrellaTab" /> },
  { id: "wind", label: "Viento", icon: <WindIcon /> },
];

const stats = [
  { value: "45%", label: "Humedad", icon: <HumidityIcon /> },
  { value: "23%", label: "Posibilidad", icon: <UmbrellaIcon id="umbrellaStat" /> },
  { value: "14°", label: "Punto de condens.", icon: <DewIcon /> },
  { value: "Húmedo", label: "Sensación", icon: <FeelIcon /> },
];

export default function App() {
  const [mode, setMode] = useState("temp");

  return (
    <>
      <GlobalStyle />
      <Screen>
        <Sky>{skyColumns.map((_, i) => <SkyColumn key={i} $index={i} />)}</Sky>
        <StatusBar>
          <Clock>06:09</Clock>
          <StatusIcons>
            <SignalIcon />
            <WifiIcon />
            <BatteryIcon />
          </StatusIcons>
        </StatusBar>
        <Header>
          <IconButton aria-label="Radar"><RadarIcon /></IconButton>
          <Place>
            <PlaceButton aria-label="Buscar lugar">
              <PlaceName>Sevilla</PlaceName>
              <SearchIcon />
            </PlaceButton>
            <DateLine>jue sep. 17, 17:00</DateLine>
          </Place>
          <IconButton aria-label="Ajustes"><GearIcon /></IconButton>
        </Header>
        <Content>
          <Card>
            <SummaryHead>
              <SummaryText>
                <CardTitle>RESUMEN</CardTitle>
                <Subtitle>Temperatura</Subtitle>
              </SummaryText>
              <Segments>
                {modes.map((m) => (
                  <Segment key={m.id} $active={mode === m.id} aria-pressed={mode === m.id} aria-label={m.label} onClick={() => setMode(m.id)}>
                    {m.icon}
                  </Segment>
                ))}
              </Segments>
            </SummaryHead>
            <TemperatureChart />
          </Card>
          <Card>
            <RainBody>
              <CardTitle>PRECIPITACIÓN</CardTitle>
              <Amount>
                <DropTile><BigDropIcon /></DropTile>
                <AmountText>0.1<Unit>mm</Unit></AmountText>
              </Amount>
              <Stats>
                {stats.map((s) => (
                  <Stat key={s.label}>
                    <StatTile>{s.icon}</StatTile>
                    <StatText>
                      <StatLabel>{s.label}</StatLabel>
                      <StatValue>{s.value}</StatValue>
                    </StatText>
                  </Stat>
                ))}
              </Stats>
            </RainBody>
            <SiriBar>
              <CloseButton aria-label="Cerrar"><CloseIcon /></CloseButton>
              <SiriText>Acceso rápido a "Precipitación"<br />usando los atajos de Siri</SiriText>
              <SiriButton>
                <MicIcon />
                <SiriLabel>Añadir<br />a Siri</SiriLabel>
              </SiriButton>
            </SiriBar>
          </Card>
          <MapCard>
            <ForecastMap />
            <MapTitle>MAPA DE PREVISIÓN DE PRECIPITACIONES</MapTitle>
          </MapCard>
        </Content>
        <HomeIndicator />
      </Screen>
    </>
  );
}
